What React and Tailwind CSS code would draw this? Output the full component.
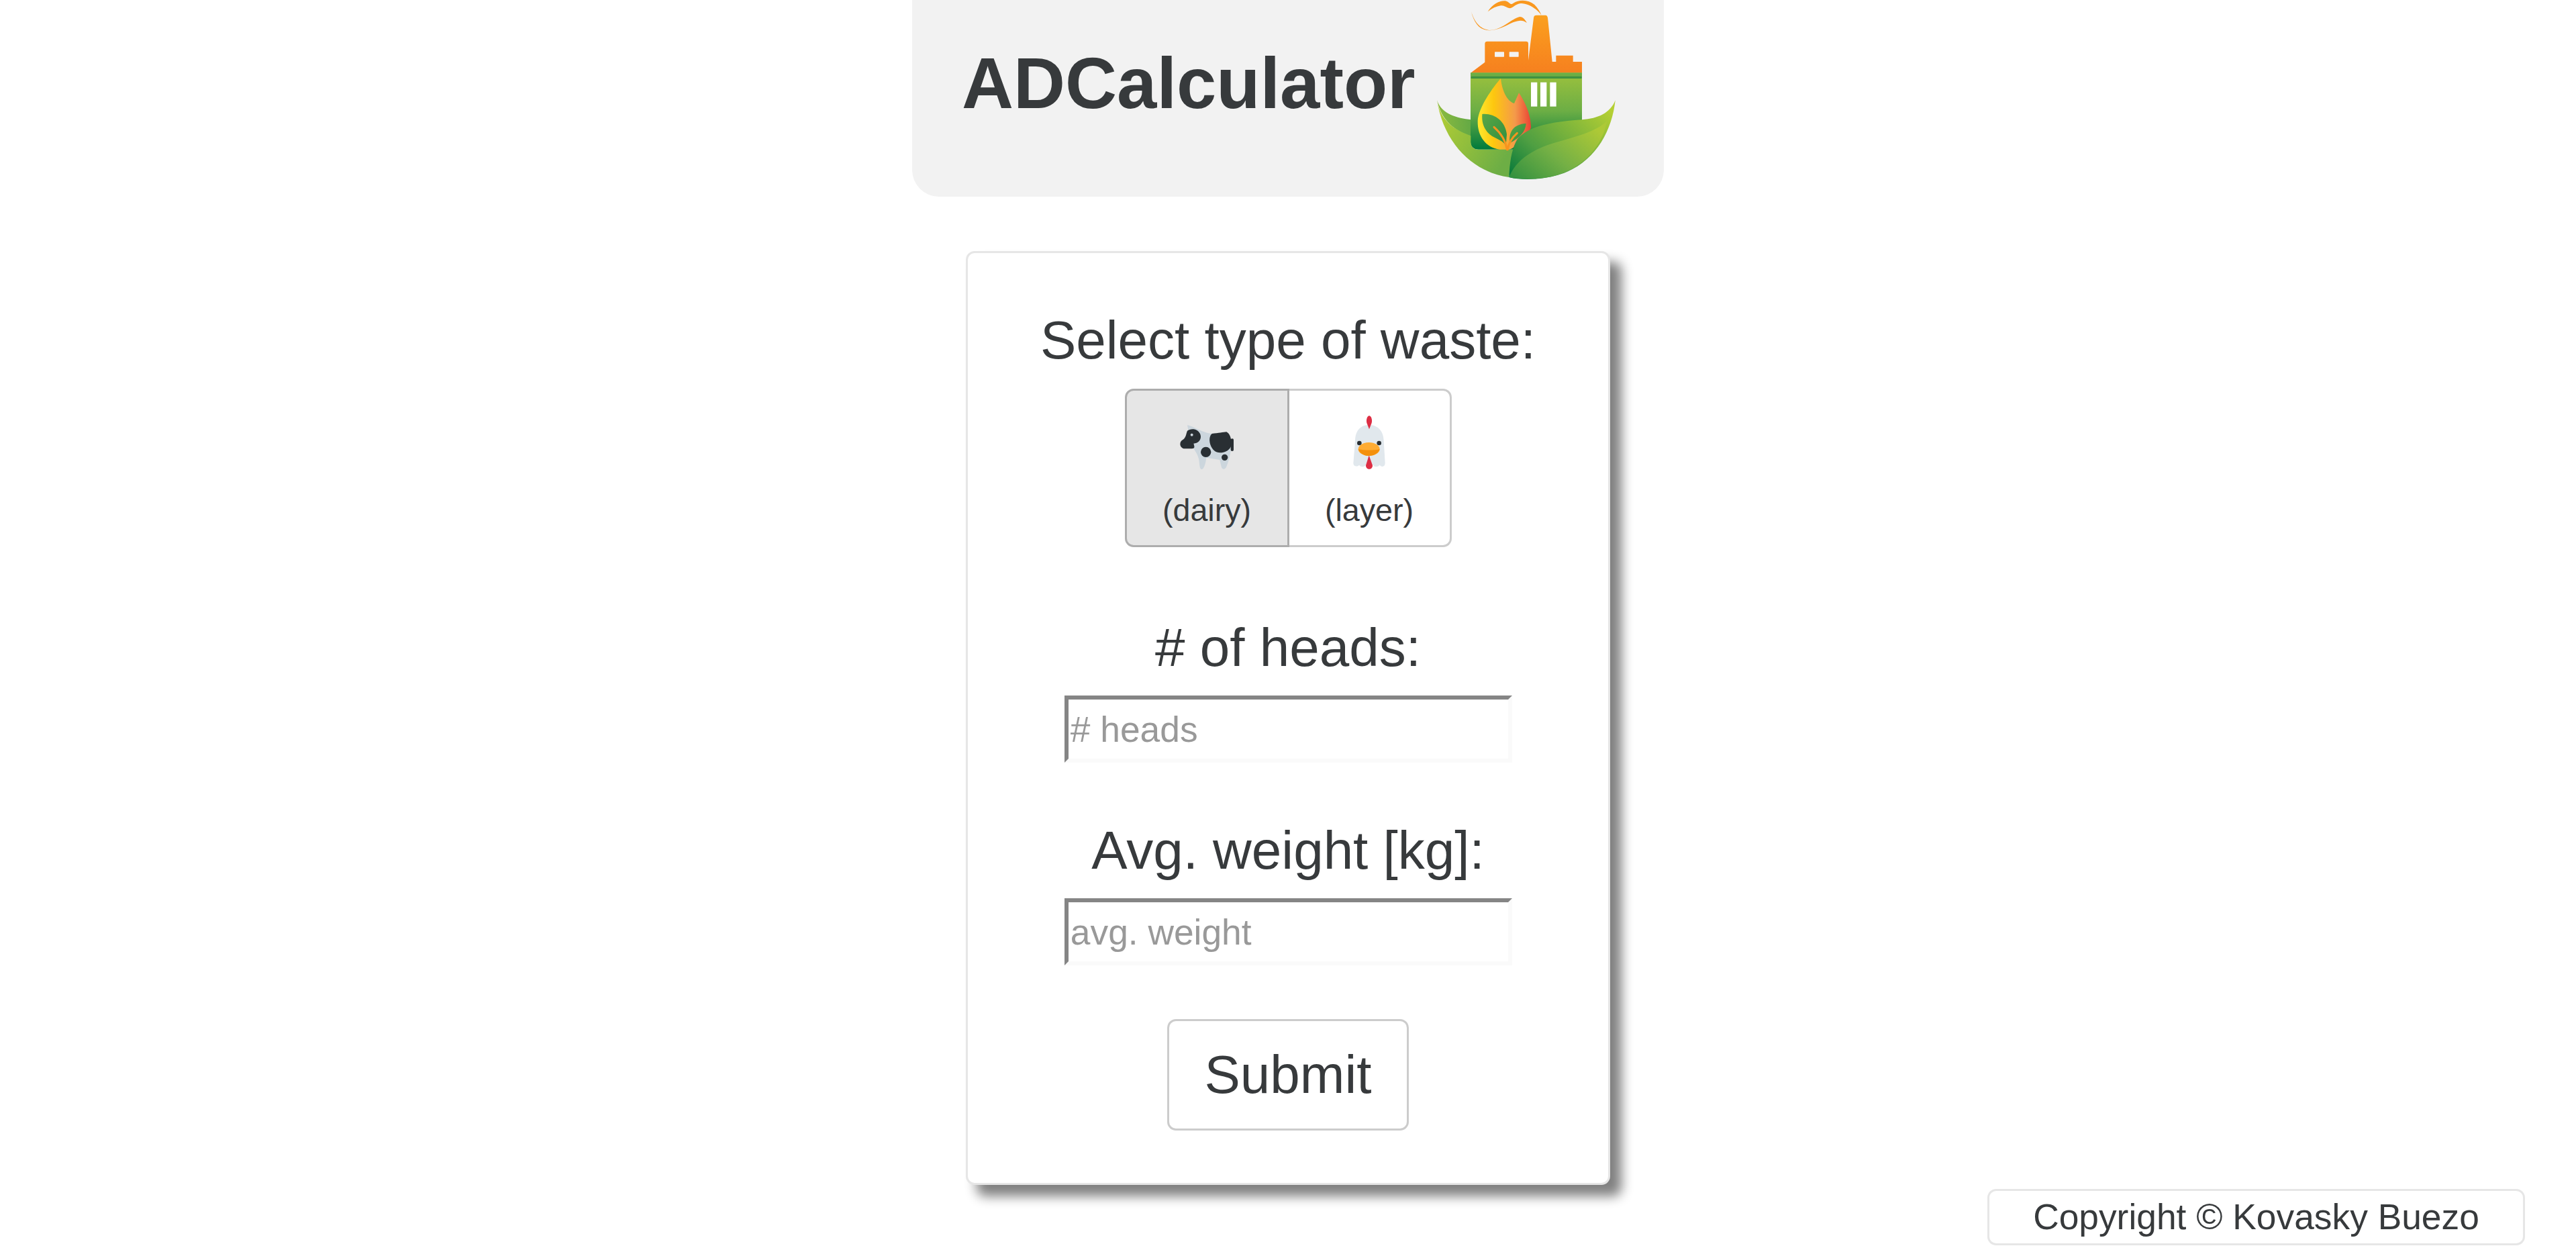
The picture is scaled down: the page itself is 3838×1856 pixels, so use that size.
function Logo() {
  return (
    <svg viewBox="0 0 1020 840" className="w-[340px] h-[280px] shrink-0 ml-[-8px]">
      <defs>
        <linearGradient id="roof" x1="0" y1="0" x2="0" y2="1">
          <stop offset="0" stopColor="#fba01e" />
          <stop offset="1" stopColor="#f6801f" />
        </linearGradient>
        <linearGradient id="wall" x1="0" y1="0" x2="0" y2="1">
          <stop offset="0" stopColor="#9cc13d" />
          <stop offset="0.5" stopColor="#6cae45" />
          <stop offset="1" stopColor="#007a3c" />
        </linearGradient>
        <linearGradient id="flame" x1="0" y1="0" x2="1" y2="0">
          <stop offset="0" stopColor="#ffe92e" />
          <stop offset="0.3" stopColor="#fdc70f" />
          <stop offset="0.7" stopColor="#f49a4a" />
          <stop offset="1" stopColor="#ea4335" />
        </linearGradient>
        <linearGradient id="leafLeft" x1="0" y1="0" x2="1" y2="0.6">
          <stop offset="0" stopColor="#b9d033" />
          <stop offset="1" stopColor="#6dae45" />
        </linearGradient>
        <linearGradient id="leafBack" x1="0" y1="0" x2="1" y2="0">
          <stop offset="0" stopColor="#8dbb3f" />
          <stop offset="1" stopColor="#64a945" />
        </linearGradient>
        <linearGradient id="leafRight" x1="0" y1="1" x2="1" y2="0.2">
          <stop offset="0" stopColor="#00763a" />
          <stop offset="0.35" stopColor="#4f9f42" />
          <stop offset="1" stopColor="#b4cf33" />
        </linearGradient>
        <linearGradient id="leafVein" x1="0" y1="1" x2="1" y2="0.3">
          <stop offset="0" stopColor="#2f8f3f" />
          <stop offset="0.5" stopColor="#74b045" />
          <stop offset="1" stopColor="#adc936" />
        </linearGradient>
        <linearGradient id="sprout" x1="0" y1="0" x2="1" y2="1">
          <stop offset="0" stopColor="#5aa646" />
          <stop offset="1" stopColor="#2f8f3f" />
        </linearGradient>
      </defs>
      <path d="M272 48C290 110 320 130 355 135C410 135 450 85 490 75C505 75 515 90 522 102C505 90 490 88 460 100C420 118 385 140 345 135C305 130 285 100 272 48Z" fill="#f9981f" />
      <path d="M347 52C370 15 405 0 430 5C445 10 450 25 460 15C490 -5 530 0 555 20C570 35 580 50 587 68C565 40 530 15 495 15C470 18 460 35 447 37C430 35 420 22 405 25C385 28 365 38 347 52Z" fill="#f9981f" />
      <path d="M120 448C140 510 210 528 272 535V610C200 585 140 540 120 448Z" fill="url(#leafBack)" />
      <path d="M270 325H768V600L470 668H305C285 668 270 655 270 635Z" fill="url(#wall)" />
      <path d="M120 448C135 540 200 582 271 607V635C271 655 285 668 305 668H460L442 792C280 770 150 640 120 448Z" fill="url(#leafLeft)" />
      <path d="M272 325L334 278V195Q334 185 345 185H518Q528 185 528 195V270L552 80Q553 68 565 68H605Q613 68 615 80L635 276H652V248H728V276H768V325Z" fill="url(#roof)" />
      <rect x="378" y="232" width="42" height="22" rx="2" fill="#f2f2f2" />
      <rect x="443" y="232" width="42" height="22" rx="2" fill="#f2f2f2" />
      <rect x="270" y="325" width="498" height="26" fill="#6cae45" />
      <rect x="272" y="341" width="495" height="10" rx="4" fill="#3f9142" />
      <rect x="540" y="368" width="28" height="108" fill="#fff" />
      <rect x="582" y="368" width="28" height="108" fill="#fff" />
      <rect x="625" y="368" width="28" height="108" fill="#fff" />
      <path d="M405 350C410 400 430 450 465 462L486 415C510 450 540 510 540 570C535 590 515 600 510 600L475 640C470 655 455 668 440 668H400C340 660 300 610 302 540C305 480 370 390 405 350Z" fill="url(#flame)" />
      <path d="M322 510C375 505 425 540 432 600L428 650C410 620 370 620 345 590C325 565 320 540 322 510Z" fill="url(#sprout)" />
      <path d="M518 552C515 590 490 615 445 640C440 590 460 555 518 552Z" fill="url(#sprout)" />
      <path d="M375 568C400 590 425 620 433 668M478 595C455 615 440 640 436 668" stroke="#f7941e" strokeWidth="9" strokeLinecap="round" fill="none" />
      <path d="M442 792C445 720 455 660 480 620C530 565 620 545 768 535C840 530 895 505 917 448C900 610 800 770 600 795C560 802 490 805 442 792Z" fill="url(#leafRight)" />
      <path d="M442 792C470 720 540 670 640 640C740 610 830 590 880 540C860 650 770 770 600 795C550 802 490 802 442 792Z" fill="url(#leafVein)" />
    </svg>
  );
}

function Cow() {
  return (
    <svg viewBox="282 135 270 270" className="w-[90px] h-[90px]">
      <path d="M330 190C360 195 400 225 440 228L500 222C520 225 530 250 525 300C520 330 515 350 505 375C500 390 485 390 482 375L475 345L415 335C412 360 405 385 395 387C385 388 385 370 382 345C375 310 350 290 345 270Z" fill="#ccd6dd" />
      <path d="M330 215C345 203 375 205 385 225C398 245 385 272 358 272C362 285 365 295 350 295H315C295 290 292 265 310 255C325 245 325 225 330 215Z" fill="#292f33" />
      <circle cx="350" cy="233" r="6" fill="#ccd6dd" />
      <path d="M440 228C470 225 490 222 505 220C520 228 530 250 525 285C515 310 480 318 460 310C430 295 420 245 440 228Z" fill="#292f33" />
      <rect x="524" y="250" width="13" height="56" rx="6" fill="#292f33" />
      <circle cx="413" cy="310" r="23" fill="#292f33" />
      <circle cx="497" cy="334" r="14" fill="#292f33" />
    </svg>
  );
}

function Chicken() {
  return (
    <svg viewBox="1008 135 270 270" className="w-[90px] h-[90px]">
      <path d="M1143 188C1100 190 1080 220 1080 260L1072 360C1072 375 1090 378 1098 368C1105 378 1120 378 1128 368H1160C1168 378 1180 378 1190 368C1198 378 1213 378 1214 360L1208 260C1208 220 1185 190 1143 188Z" fill="#e1e8ed" />
      <path d="M1143 148C1135 148 1128 165 1132 180L1143 208L1154 180C1158 165 1151 148 1143 148Z" fill="#dd2e44" />
      <path d="M1142 325L1128 370C1128 392 1158 392 1158 370Z" fill="#dd2e44" />
      <circle cx="1099" cy="270" r="10" fill="#292f33" />
      <circle cx="1187" cy="270" r="10" fill="#292f33" />
      <ellipse cx="1142" cy="297" rx="48" ry="30" fill="#ffac33" />
      <path d="M1094 297C1100 315 1120 327 1142 327C1164 327 1184 315 1190 297C1170 303 1115 303 1094 297Z" fill="#f4900c" />
    </svg>
  );
}

export default function App() {
  return (
    <div className="flex flex-col items-center min-h-screen bg-white text-[#373a3c] font-['Liberation_Sans',sans-serif]">
      <header className="flex items-start w-[1120px] h-[293px] pl-[74px] bg-[#f2f2f2] rounded-b-[40px] overflow-hidden">
        <h1 className="mt-[44px] text-[106.67px] leading-[160px] font-bold">ADCalculator</h1>
        <Logo />
      </header>

      <main className="flex flex-col items-center w-[960px] h-[1391px] mt-[81px] pt-[70px] bg-white border-[3.33px] border-[#e6e6e6] rounded-[13px] shadow-[16.67px_16.67px_16.67px_#808080]">
        <label className="text-[80px] leading-[120px]">Select type of waste:</label>

        <div className="flex mt-[12px] w-[487px] h-[236px]">
          <button className="flex flex-col items-center flex-1 pt-[33px] bg-[#e6e6e6] border-[3.33px] border-[#adadad] rounded-l-[13px] text-[46.67px] leading-[70px]">
            <Cow />
            <span className="mt-[20px]">(dairy)</span>
          </button>
          <button className="flex flex-col items-center flex-1 pt-[33px] bg-white border-[3.33px] border-l-0 border-[#cccccc] rounded-r-[13px] text-[46.67px] leading-[70px]">
            <Chicken />
            <span className="mt-[20px]">(layer)</span>
          </button>
        </div>

        <label className="mt-[90px] text-[80px] leading-[120px]">{'# of heads:'}</label>
        <input
          placeholder="# heads"
          className="mt-[11px] w-[667px] h-[100px] px-[3.33px] bg-white border-[6.67px] border-t-[#858585] border-l-[#858585] border-r-[#fafafa] border-b-[#fafafa] text-[53.33px] placeholder:text-[#999999] outline-none"
        />

        <label className="mt-[71px] text-[80px] leading-[120px]">Avg. weight [kg]:</label>
        <input
          placeholder="avg. weight"
          className="mt-[11px] w-[667px] h-[100px] px-[3.33px] bg-white border-[6.67px] border-t-[#858585] border-l-[#858585] border-r-[#fafafa] border-b-[#fafafa] text-[53.33px] placeholder:text-[#999999] outline-none"
        />

        <button className="mt-[80px] w-[360px] h-[166px] bg-white border-[3.33px] border-[#cccccc] rounded-[13px] text-[80px] leading-[120px]">
          Submit
        </button>
      </main>

      <footer className="self-end mt-[6px] mr-[76px] w-[801px] h-[84px] flex items-center justify-center border-[3.33px] border-[#e6e6e6] rounded-[13px] text-[53.33px] leading-[80px]">
        Copyright © Kovasky Buezo
      </footer>
    </div>
  );
}
